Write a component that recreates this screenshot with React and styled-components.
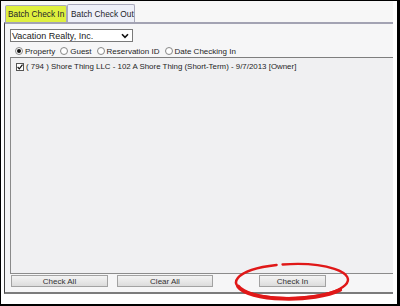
import React from "react";
import styled, { createGlobalStyle } from "styled-components";

const Global = createGlobalStyle`
  html, body { margin: 0; padding: 0; background: #fff; }
  body { font-family: "Liberation Sans", Arial, sans-serif; }
`;

const Stage = styled.div`
  position: relative;
  width: 400px;
  height: 306px;
`;

const Frame = styled.div`
  box-sizing: border-box;
  width: 400px;
  height: 306px;
  border-style: solid;
  border-color: #000;
  border-width: 1px 3px 2px 1px;
  background: #fff;
  padding-right: 4px;
  display: flex;
  flex-direction: column;
`;

const TabBar = styled.div`
  height: 21px;
  background: #f7f7f7;
  display: flex;
  align-items: flex-end;
  padding-left: 4px;
`;

const Tab = styled.div`
  box-sizing: border-box;
  height: ${p => p.$h}px;
  width: ${p => p.$w}px;
  border: 1px solid #a9a9bb;
  border-bottom: none;
  border-radius: 2px 2px 0 0;
  background: ${p => (p.$highlight ? "#dff03e" : "#eef0f8")};
  font-size: 8.3px;
  color: #1d1d2a;
  display: flex;
  align-items: center;
  padding-left: ${p => p.$pl}px;
  white-space: nowrap;
`;

const Panel = styled.div`
  box-sizing: border-box;
  margin-left: 3px;
  height: 272px;
  border-top: 2px solid #a3a3b3;
  border-left: 1px solid #3e3e3e;
  border-bottom: 2px solid #7c7c7c;
  background: #f6f6f7;
  padding: 5px 0 5px 5px;
  display: flex;
  flex-direction: column;
`;

const Select = styled.div`
  box-sizing: border-box;
  width: 123px;
  height: 13px;
  border: 1px solid #7a7a7a;
  background: #fff;
  display: flex;
  align-items: center;
  justify-content: space-between;
  padding: 0 3px 0 1px;
  font-size: 9px;
  color: #1a1a1a;
  white-space: nowrap;
`;

const RadioRow = styled.div`
  margin-top: 3px;
  height: 12px;
  display: flex;
  align-items: center;
  padding-left: 5px;
  gap: 5px;
`;

const RadioItem = styled.label`
  display: flex;
  align-items: center;
  gap: 2px;
  font-size: 8px;
  color: #1e1e1e;
  white-space: nowrap;
`;

const RadioDot = styled.span`
  box-sizing: border-box;
  width: 8px;
  height: 8px;
  border-radius: 50%;
  border: 1px solid #8a8a8a;
  background: radial-gradient(circle, #fff 55%, #e4e4e4 100%);
  display: flex;
  align-items: center;
  justify-content: center;
  &::after {
    content: "";
    width: 4px;
    height: 4px;
    border-radius: 50%;
    background: ${p => (p.$checked ? "#111" : "transparent")};
  }
`;

const ListBox = styled.div`
  box-sizing: border-box;
  height: 217px;
  border-top: 1px solid #7e7e7e;
  border-left: 1px solid #8a8a8a;
  border-bottom: 1px solid #8c8c8c;
  background: #f0f0f2;
  padding: 4px 0 0 5px;
`;

const ListRow = styled.div`
  display: flex;
  align-items: center;
  gap: 2px;
  font-size: 7.9px;
  color: #1e1e1e;
  white-space: nowrap;
`;

const Check = styled.span`
  box-sizing: border-box;
  width: 8px;
  height: 8px;
  border: 1px solid #555;
  background: #fff;
  display: flex;
  align-items: center;
  justify-content: center;
`;

const ButtonRow = styled.div`
  margin-top: 1px;
  height: 12px;
  display: flex;
  padding-left: 1px;
`;

const Button = styled.div`
  box-sizing: border-box;
  width: ${p => p.$w}px;
  margin-left: ${p => p.$ml || 0}px;
  height: 12px;
  border: 1px solid #a2a2a2;
  background: linear-gradient(#f4f4f4, #dcdcdc);
  font-size: 8px;
  color: #333;
  display: flex;
  align-items: center;
  justify-content: center;
  white-space: nowrap;
`;

const Overlay = styled.svg`
  position: absolute;
  left: 0;
  top: 0;
  pointer-events: none;
`;

export default function App() {
  return (
    <Stage>
      <Global />
      <Frame>
        <TabBar>
          <Tab $highlight $w={62} $h={17} $pl={2}>Batch Check In</Tab>
          <Tab $w={68} $h={18} $pl={3}>Batch Check Out</Tab>
        </TabBar>
        <Panel>
          <Select>
            <span>Vacation Realty, Inc.</span>
            <svg width="8" height="6" viewBox="0 0 8 6">
              <path d="M1 1.2 L4 4.4 L7 1.2" fill="none" stroke="#111" strokeWidth="1.6" />
            </svg>
          </Select>
          <RadioRow>
            <RadioItem><RadioDot $checked />Property</RadioItem>
            <RadioItem><RadioDot />Guest</RadioItem>
            <RadioItem><RadioDot />Reservation ID</RadioItem>
            <RadioItem><RadioDot />Date Checking In</RadioItem>
          </RadioRow>
          <ListBox>
            <ListRow>
              <Check>
                <svg width="6" height="6" viewBox="0 0 6 6">
                  <path d="M0.6 3 L2.3 4.8 L5.5 0.6" fill="none" stroke="#111" strokeWidth="1.2" />
                </svg>
              </Check>
              ( 794 ) Shore Thing LLC - 102 A Shore Thing (Short-Term) - 9/7/2013 [Owner]
            </ListRow>
          </ListBox>
          <ButtonRow>
            <Button $w={97}>Check All</Button>
            <Button $w={96} $ml={9}>Clear All</Button>
            <Button $w={67} $ml={46}>Check In</Button>
          </ButtonRow>
        </Panel>
      </Frame>
      <Overlay width="400" height="306" viewBox="0 0 400 306">
        <g transform="rotate(-1.5 292 281)">
          <path
            d="M283 264.2 A56 17 0 1 1 277 264.6"
            fill="none"
            stroke="#e01818"
            strokeWidth="2.4"
            strokeLinecap="round"
          />
          <path
            d="M340 291 A56 17 0 0 1 238 285"
            fill="none"
            stroke="#e01818"
            strokeWidth="3.8"
            strokeLinecap="round"
          />
        </g>
      </Overlay>
    </Stage>
  );
}
